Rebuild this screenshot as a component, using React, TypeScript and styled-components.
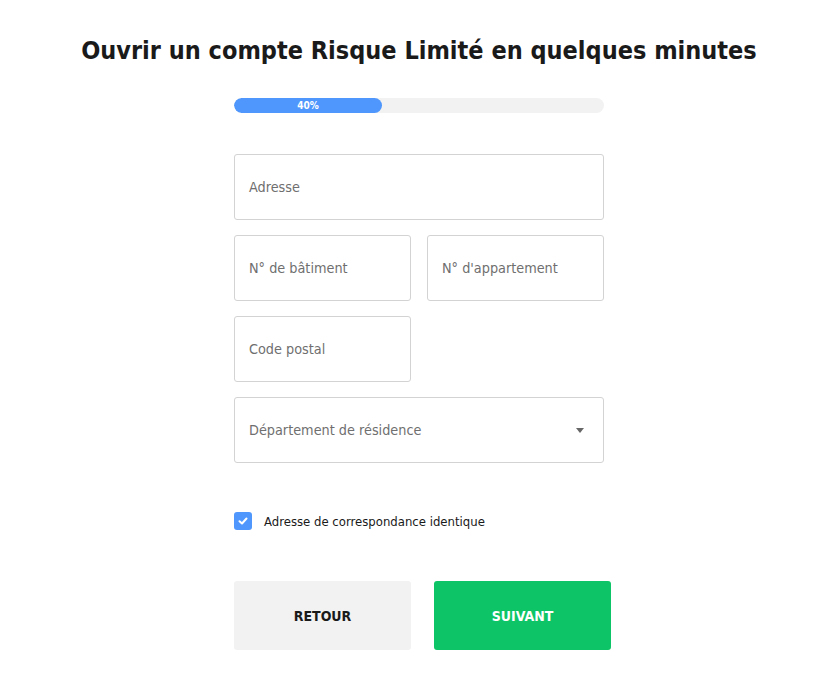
import React from "react";
import styled, { createGlobalStyle } from "styled-components";

const Global = createGlobalStyle`
  html, body { margin: 0; padding: 0; background: #fff; }
  body { font-family: "DejaVu Sans Condensed", "DejaVu Sans", sans-serif; color: #1a1a1a; }
  * { box-sizing: border-box; }
`;

const Page = styled.div`
  width: 818px;
  display: flex;
  flex-direction: column;
  align-items: center;
  padding: 34px 0 0 20px;
`;

const Title = styled.h1`
  margin: 0;
  font-size: 25px;
  line-height: 34px;
  font-weight: 700;
  color: #1a1a1a;
`;

const Form = styled.div`
  width: 370px;
  margin-top: 30px;
  display: flex;
  flex-direction: column;
`;

const Track = styled.div`
  height: 15px;
  border-radius: 8px;
  background: #f2f2f2;
  overflow: hidden;
`;

const Fill = styled.div`
  height: 100%;
  border-radius: 8px;
  background: #4f97fc;
  color: #fff;
  font-size: 10px;
  font-weight: 700;
  display: flex;
  align-items: center;
  justify-content: center;
`;

const Fields = styled.div`
  margin-top: 41px;
  display: grid;
  grid-template-columns: 1fr 1fr;
  column-gap: 16px;
  row-gap: 15px;
`;

const Field = styled.div<{ $full?: boolean }>`
  grid-column: ${(p) => (p.$full ? "1 / -1" : "auto")};
  height: 66px;
  border: 1px solid #d3d3d3;
  border-radius: 3px;
  padding: 0 14px;
  display: flex;
  align-items: center;
  justify-content: space-between;
  font-size: 14.3px;
  color: #6f6f6f;
`;

const Caret = styled.span`
  width: 0;
  height: 0;
  border-left: 4px solid transparent;
  border-right: 4px solid transparent;
  border-top: 5px solid #666;
  margin-right: 5px;
`;

const CheckRow = styled.label`
  margin-top: 49px;
  display: flex;
  align-items: center;
  gap: 12px;
  font-size: 13px;
  color: #1a1a1a;
`;

const Box = styled.span`
  width: 18px;
  height: 18px;
  border-radius: 3px;
  background: #4f97fc;
  display: flex;
  align-items: center;
  justify-content: center;
`;

const Buttons = styled.div`
  margin-top: 51px;
  display: flex;
  gap: 23px;
`;

const Button = styled.button<{ $primary?: boolean }>`
  flex: 0 0 177px;
  height: 69px;
  border: none;
  border-radius: 3px;
  background: ${(p) => (p.$primary ? "#0dc566" : "#f2f2f2")};
  color: ${(p) => (p.$primary ? "#fff" : "#1a1a1a")};
  font-family: inherit;
  font-size: 14px;
  font-weight: 700;
  cursor: pointer;
`;

export default function App() {
  return (
    <>
      <Global />
      <Page>
        <Title>Ouvrir un compte Risque Limité en quelques minutes</Title>
        <Form>
          <Track>
            <Fill style={{ width: "40%" }}>40%</Fill>
          </Track>
          <Fields>
            <Field $full>Adresse</Field>
            <Field>N° de bâtiment</Field>
            <Field>N° d'appartement</Field>
            <Field>Code postal</Field>
            <div />
            <Field $full>
              Département de résidence
              <Caret />
            </Field>
          </Fields>
          <CheckRow>
            <Box>
              <svg width="10" height="8" viewBox="0 0 10 8">
                <path d="M1.5 4.2 L4 6.5 L8.5 1.5" stroke="#fff" strokeWidth="2" fill="none" strokeLinecap="round" strokeLinejoin="round" />
              </svg>
            </Box>
            Adresse de correspondance identique
          </CheckRow>
          <Buttons>
            <Button>RETOUR</Button>
            <Button $primary>SUIVANT</Button>
          </Buttons>
        </Form>
      </Page>
    </>
  );
}
